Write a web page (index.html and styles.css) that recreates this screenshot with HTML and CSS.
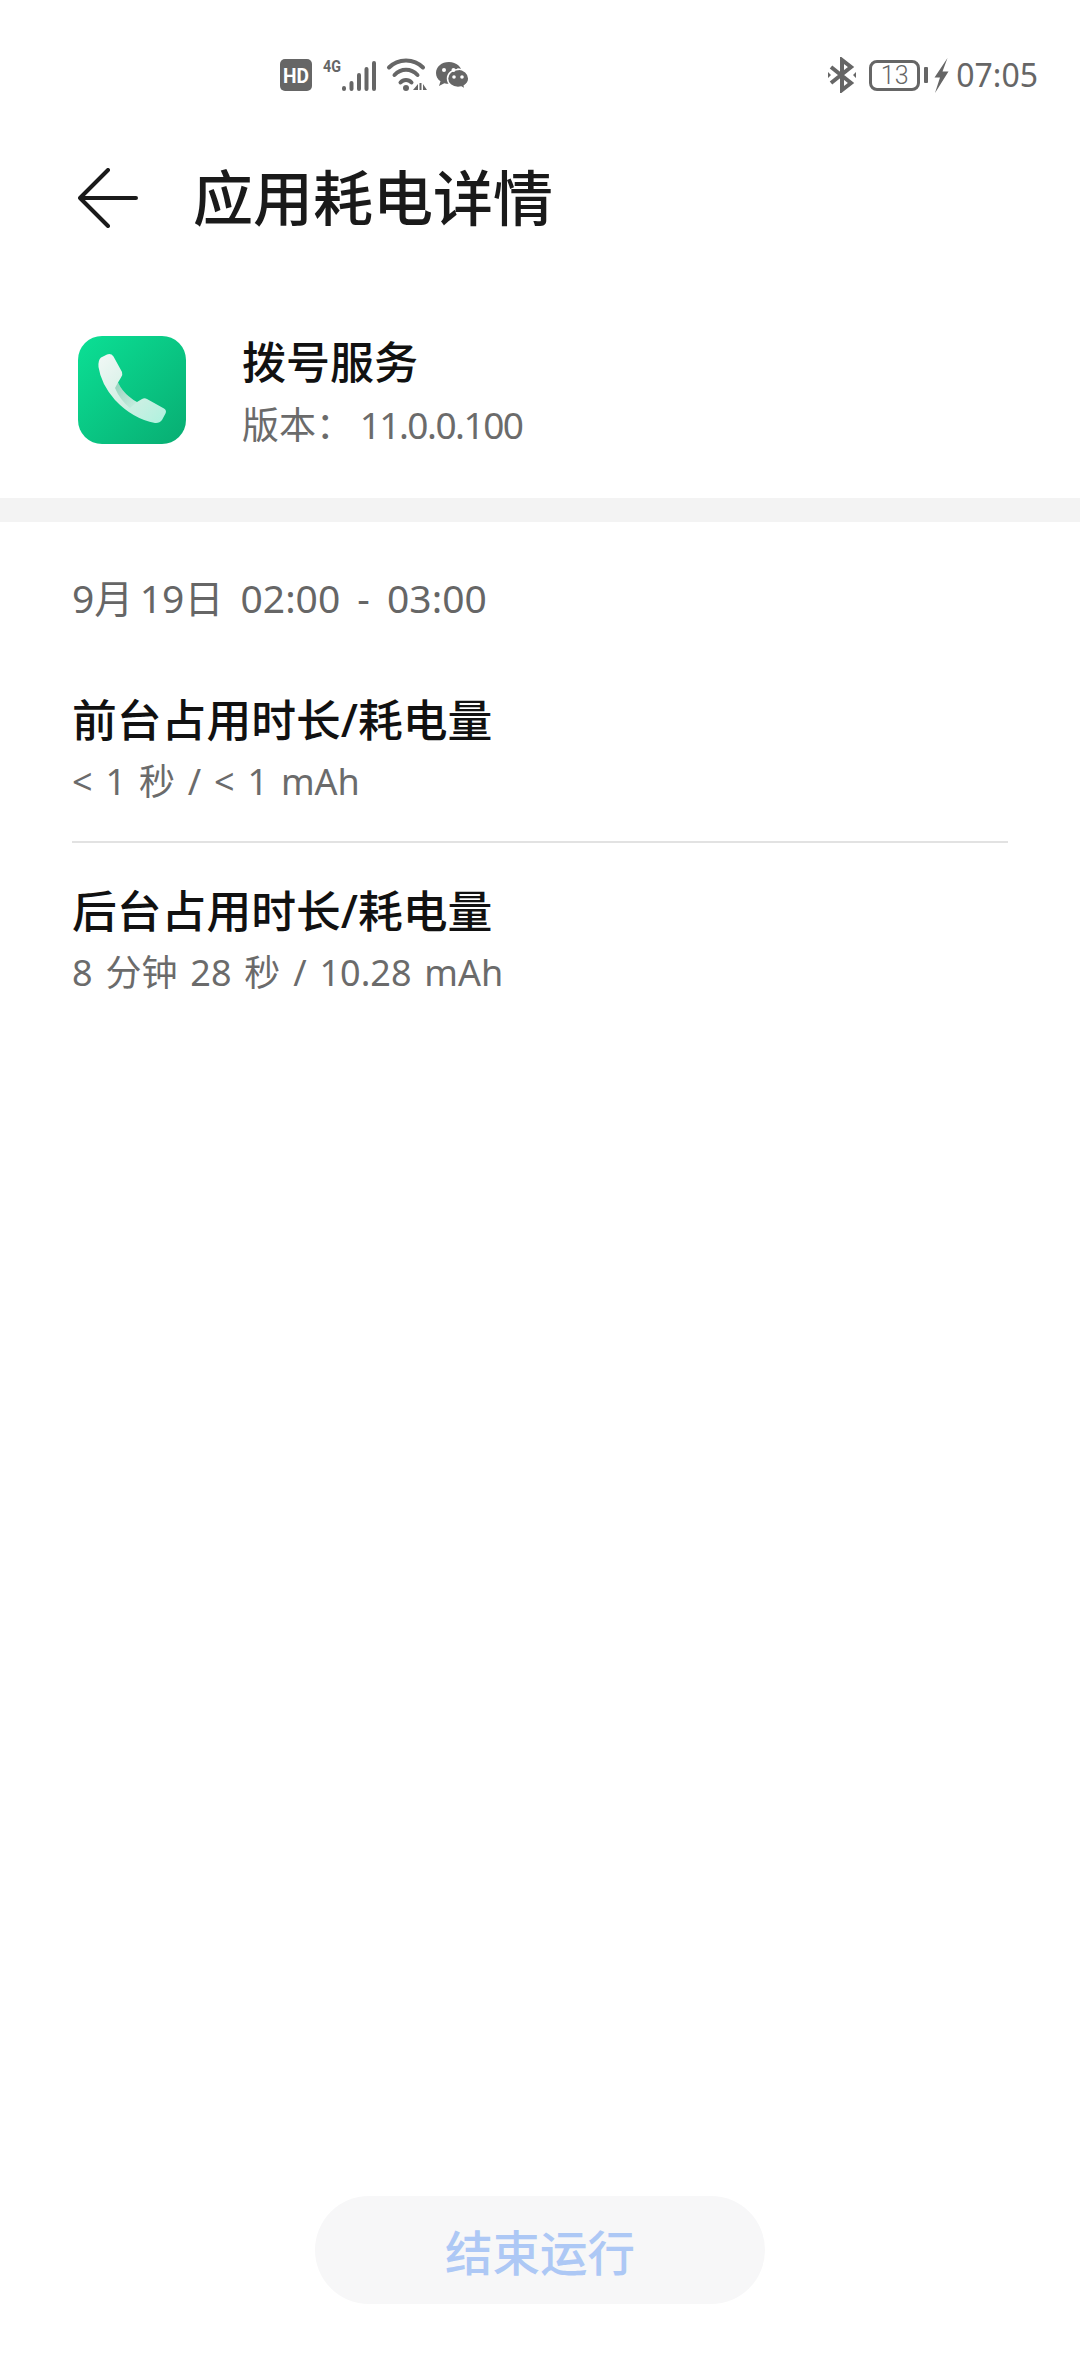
FILE: index.html
```html
<!DOCTYPE html>
<html lang="zh-CN">
<head>
<meta charset="utf-8">
<title>应用耗电详情</title>
<link rel="stylesheet" href="styles.css">
</head>
<body>
<div class="phone">
  <div class="status">
    <div class="status-left">
      <svg class="i-hd" viewBox="0 0 32 32">
        <rect width="32" height="32" rx="5" fill="#666"/>
        <text x="3" y="23.500" class="hd-text" textLength="26" lengthAdjust="spacingAndGlyphs">HD</text>
      </svg>
      <svg class="i-signal" viewBox="0 0 56 36">
        <text x="1" y="15" class="net" textLength="18" lengthAdjust="spacingAndGlyphs">4G</text>
        <g stroke="#666" stroke-width="4" stroke-linecap="round">
          <path d="M22 31v1M29.500 26v6M37 18v14M44.500 12v20M52 6v26"/>
        </g>
      </svg>
      <svg class="i-wifi" viewBox="0 0 42 36" fill="none" stroke="#666" stroke-width="4" stroke-linecap="round">
        <path d="M3 10.500C12 1 28 1 37 10.500"/>
        <path d="M8.500 18C15 11 25 11 31.500 18"/>
        <path d="M14.500 25.500C17.500 22 22.500 22 25.500 25.500"/>
        <circle cx="20" cy="31" r="3" fill="#666" stroke="none"/>
        <path d="M27 33l5-6v6zM33.500 26h2v7h-2zM37 27l4 6h-4z" fill="#666" stroke="none"/>
      </svg>
      <svg class="i-wechat" viewBox="0 0 36 36">
        <path d="M15 5C7.500 5 2 9.800 2 16c0 3.400 1.700 6.300 4.500 8.300L5 29l5.300-2.800c1.500.4 3 .6 4.700.6 7.500 0 13-4.800 13-10.800S22.500 5 15 5z" fill="#666"/>
        <path d="M24 12.500c-6 0-10.500 4-10.500 9s4.500 9 10.500 9c1.200 0 2.300-.2 3.300-.5l4 2.500-1-3.700c2.700-1.700 4.500-4.500 4.500-7.300 0-5-4.800-9.500-10.800-9.500z" fill="#666" stroke="#fff" stroke-width="1.500"/>
        <g fill="#fff"><circle cx="10" cy="13" r="2"/><circle cx="19.500" cy="13" r="2"/><circle cx="20" cy="20" r="1.800"/><circle cx="28" cy="20" r="1.800"/></g>
      </svg>
    </div>
    <div class="status-right">
      <svg class="i-bt" viewBox="0 0 30 36" fill="none" stroke="#666" stroke-width="4">
        <path d="M4 10l20 16-9 7V3l9 7L4 26"/>
        <path d="M1 15l3 3-3 3zM29 15l-3 3 3 3z" fill="#666" stroke="none"/>
      </svg>
      <div class="battery"><span class="battery-num">13</span></div>
      <span class="battery-cap"></span>
      <svg class="i-bolt" viewBox="0 0 16 36"><path d="M14.500 1L1.500 20.500h5.500L2 36 15.500 14.500H9.500z" fill="#666"/></svg>
      <span class="clock">07:05</span>
    </div>
  </div>

  <header class="titlebar">
    <svg class="i-back" viewBox="0 0 60 60" fill="none" stroke="#1a1a1a" stroke-width="4" stroke-linecap="round" stroke-linejoin="round"><path d="M30 2L2 30l28 28M2 30h56"/></svg>
    <h1 class="title">应用耗电详情</h1>
  </header>

  <section class="app">
    <svg class="app-icon" viewBox="0 0 108 108">
      <defs>
        <linearGradient id="bg" x1="0" y1="0" x2="1" y2="1"><stop offset="0" stop-color="#0be095"/><stop offset="1" stop-color="#08ad72"/></linearGradient>
        <linearGradient id="ph" x1="0" y1="0" x2="1" y2="1"><stop offset="0" stop-color="#f2f8f6"/><stop offset=".55" stop-color="#d2efe4"/><stop offset="1" stop-color="#aef2de"/></linearGradient>
        <linearGradient id="sh" x1="0" y1="0" x2="1" y2="1"><stop offset="0" stop-color="#0c9a68" stop-opacity=".35"/><stop offset="1" stop-color="#0c9a68" stop-opacity="0"/></linearGradient>
      </defs>
      <rect width="108" height="108" rx="24" fill="url(#bg)"/>
      <path d="M23 21.500L29 18.500Q33 17 35.500 20.500L44 36Q45 39 43 41.500L40 46.500Q44 55 51 60.500Q55 64 59 66L64 63Q66.500 61.500 69 63L86 72.500Q89 74.500 87.500 77.500L84 84Q81.500 87.500 77 87Q55 83 37 64Q23 48 20.500 31Q20 24 23 21.500Z" fill="url(#ph)"/>
      <path d="M40 46.500Q44 55 51 60.500Q55 64 59 66L52 72Q42 64 37 52Z" fill="url(#sh)"/>
    </svg>
    <div class="app-text">
      <div class="app-name">拨号服务</div>
      <div class="app-ver">版本： <span class="ver-num">11.0.0.100</span></div>
    </div>
  </section>

  <div class="band"></div>

  <main class="details">
    <div class="date">9月&#8201;19日 02:00 - 03:00</div>
    <div class="row row-first">
      <div class="row-title">前台占用时长/耗电量</div>
      <div class="row-sub">&lt; 1 秒 / &lt; 1 mAh</div>
    </div>
    <div class="row">
      <div class="row-title">后台占用时长/耗电量</div>
      <div class="row-sub">8 分钟 28 秒 / 10.28 mAh</div>
    </div>
  </main>

  <div class="footer"><button class="stop">结束运行</button></div>
</div>
</body>
</html>
```
FILE: styles.css
```css
* { box-sizing: border-box; margin: 0; padding: 0; }
html, body { width: 1080px; height: 2376px; background: #fff; overflow: hidden; }
body { font-family: "Noto Sans", "Noto Sans CJK SC", sans-serif; }
.phone { width: 1080px; height: 2376px; display: flex; flex-direction: column; }

.status { height: 88px; flex: none; padding: 57px 42px 0 280px; display: flex; justify-content: space-between; align-items: flex-start; }
.status-left, .status-right { display: flex; align-items: center; height: 36px; }
.i-hd { width: 32px; height: 32px; flex: none; }
.hd-text { font: 700 21px "Roboto", sans-serif; fill: #fff; }
.i-signal { width: 56px; height: 36px; margin-left: 10px; flex: none; }
.net { font: 700 17px "Roboto", sans-serif; fill: #666; }
.i-wifi { width: 42px; height: 36px; margin-left: 8px; flex: none; }
.i-wechat { width: 36px; height: 36px; margin-left: 6px; flex: none; }
.i-bt { width: 30px; height: 36px; flex: none; }
.battery { width: 51px; height: 31px; margin-left: 12px; border: 3px solid #666; border-radius: 8px; display: flex; align-items: center; justify-content: center; }
.battery-num { font: 300 25px/1 "Roboto", sans-serif; color: #666; }
.battery-cap { width: 4px; height: 16px; margin-left: 4px; background: #666; border-radius: 1px; }
.i-bolt { width: 16px; height: 36px; margin-left: 5px; flex: none; }
.clock { margin-left: 7px; font: 400 32px/36px "Noto Sans", sans-serif; color: #666; }

.titlebar { height: 220px; flex: none; padding-left: 78px; display: flex; align-items: center; }
.i-back { width: 60px; height: 60px; flex: none; }
.title { margin-left: 55px; font-size: 60px; font-weight: 500; color: #1a1a1a; line-height: 80px; }

.app { height: 190px; flex: none; padding: 28px 0 0 78px; display: flex; align-items: flex-start; }
.app-icon { width: 108px; height: 108px; flex: none; }
.app-text { margin-left: 56px; }
.app-name { font-size: 44px; line-height: 56px; font-weight: 500; color: #111; margin-top: -2px; }
.app-ver { font-size: 37px; line-height: 48px; color: #6b6b6b; margin-top: 11px; word-spacing: -3px; }
.ver-num { letter-spacing: -1.500px; }

.band { height: 24px; flex: none; background: #f3f3f3; }

.details { padding: 50px 72px 0; flex: 1; }
.date { font-size: 39px; line-height: 52px; color: #666; word-spacing: 7px; }
.row-first { margin-top: 66px; padding-bottom: 35px; border-bottom: 2px solid #e2e2e2; }
.row-first + .row { margin-top: 38px; }
.row-title { font-size: 44.800px; line-height: 60px; font-weight: 500; color: #111; }
.row-sub { font-size: 36px; line-height: 48px; margin-top: 8px; color: #6b6b6b; word-spacing: 3.500px; }

.footer { height: 180px; flex: none; padding-left: 315px; }
.stop { width: 450px; height: 108px; border: 0; border-radius: 54px; background: #f7f7f8; color: #adc8f5; font: 500 47.500px "Noto Sans CJK SC", sans-serif; }
```
